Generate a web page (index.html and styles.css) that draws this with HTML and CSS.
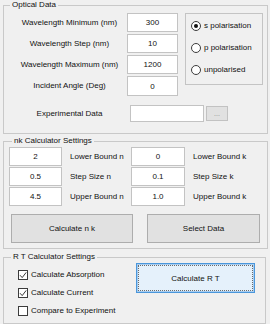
FILE: index.html
```html
<!DOCTYPE html>
<html lang="en">
<head>
  <meta charset="UTF-8">
  <meta name="viewport" content="width=device-width, initial-scale=1.0">
  <title>nk / RT Calculator</title>
  <link rel="stylesheet" href="styles.css">
</head>
<body>
  <fieldset class="panel optical">
    <legend>Optical Data</legend>
    <div class="optical-top">
      <div class="fields">
        <label class="field-label">Wavelength Minimum (nm)</label>
        <input class="num" type="text" value="300">
        <label class="field-label">Wavelength Step (nm)</label>
        <input class="num" type="text" value="10">
        <label class="field-label">Wavelength Maximum (nm)</label>
        <input class="num" type="text" value="1200">
        <label class="field-label">Incident Angle (Deg)</label>
        <input class="num tall" type="text" value="0">
      </div>
      <div class="radio-box">
        <div class="radio-item"><span class="radio checked"></span>s polarisation</div>
        <div class="radio-item"><span class="radio"></span>p polarisation</div>
        <div class="radio-item"><span class="radio"></span>unpolarised</div>
      </div>
    </div>
    <div class="exp-row">
      <label class="field-label">Experimental Data</label>
      <input class="path" type="text" value="">
      <button class="browse">...</button>
    </div>
  </fieldset>

  <fieldset class="panel nk">
    <legend>nk Calculator Settings</legend>
    <div class="nk-grid">
      <input class="num" type="text" value="2">
      <span class="nk-label">Lower Bound n</span>
      <input class="num" type="text" value="0">
      <span class="nk-label">Lower Bound k</span>

      <input class="num" type="text" value="0.5">
      <span class="nk-label">Step Size n</span>
      <input class="num" type="text" value="0.1">
      <span class="nk-label">Step Size k</span>

      <input class="num" type="text" value="4.5">
      <span class="nk-label">Upper Bound n</span>
      <input class="num" type="text" value="1.0">
      <span class="nk-label">Upper Bound k</span>
    </div>
    <div class="nk-buttons">
      <button class="btn calc-nk">Calculate n k</button>
      <button class="btn select-data">Select Data</button>
    </div>
  </fieldset>

  <fieldset class="panel rt">
    <legend>R T Calculator Settings</legend>
    <div class="rt-body">
      <div class="checks">
        <div class="check-item">
          <span class="check"><svg viewBox="0 0 10 10" width="10" height="10"><path d="M2 5.2 L4.2 7.6 L8.2 2.4" fill="none" stroke="#3a3a3a" stroke-width="1"/></svg></span>
          Calculate Absorption
        </div>
        <div class="check-item">
          <span class="check"><svg viewBox="0 0 10 10" width="10" height="10"><path d="M2 5.2 L4.2 7.6 L8.2 2.4" fill="none" stroke="#3a3a3a" stroke-width="1"/></svg></span>
          Calculate Current
        </div>
        <div class="check-item">
          <span class="check"></span>
          Compare to Experiment
        </div>
      </div>
      <button class="btn calc-rt">Calculate R T</button>
    </div>
  </fieldset>
</body>
</html>
```

FILE: styles.css
```css
body {
  margin: 0;
  padding: 0;
  background-color: #f0f0f0;
  font-family: "Liberation Sans", Arial, sans-serif;
  font-size: 8px;
  line-height: 10px;
  color: #111;
  width: 270px;
  height: 324px;
  overflow: hidden;
}

/* group boxes */
.panel {
  margin: 0 0 0 3px;
  border: 1px solid #c9c9c9;
  box-sizing: border-box;
  min-width: 0;
}

.panel legend {
  padding: 0 2px;
  line-height: 10px;
  height: 10px;
}

.optical {
  width: 265px;
  padding: 3px 4px 11px 8px;
}

.optical legend {
  margin-left: -2px;
}

.nk {
  width: 265px;
  margin-top: 2px;
  padding: 1px 4px 5px 5px;
}

.nk legend {
  margin-left: 3px;
}

.rt {
  width: 263px;
  margin-top: 3px;
  padding: 1px 4px 7px 14px;
}

.rt legend {
  margin-left: -7px;
}

/* inputs */
input {
  font-family: inherit;
  font-size: 8px;
  color: #111;
  box-sizing: border-box;
  border: 1px solid #c3c3c3;
  background: #fff;
  margin: 0;
  padding: 0;
  outline: none;
}

.num {
  text-align: center;
  height: 19px;
}

/* optical data */
.optical-top {
  display: flex;
  align-items: flex-start;
}

.fields {
  display: grid;
  grid-template-columns: 115px 51px;
  row-gap: 2px;
  align-items: center;
}

.fields .tall {
  height: 20px;
}

.field-label {
  text-align: center;
}

.radio-box {
  margin-left: 7px;
  width: 78px;
  height: 72px;
  box-sizing: border-box;
  border: 1px solid #c4c4c4;
  padding: 1px 0 0 5px;
}

.radio-item {
  display: flex;
  align-items: center;
  height: 22px;
}

.radio {
  width: 10px;
  height: 10px;
  box-sizing: border-box;
  border: 1px solid #3c3c3c;
  border-radius: 50%;
  background: #fff;
  margin-right: 3px;
  display: flex;
  align-items: center;
  justify-content: center;
}

.radio.checked::after {
  content: "";
  width: 4px;
  height: 4px;
  border-radius: 50%;
  background: #111;
}

.exp-row {
  display: flex;
  align-items: center;
  margin-top: 9px;
  height: 17px;
}

.exp-row .field-label {
  width: 115px;
}

.path {
  margin-left: 3px;
  width: 74px;
  height: 17px;
}

.browse {
  margin-left: 2px;
  width: 22px;
  height: 15px;
  padding: 0;
  font-family: inherit;
  font-size: 7px;
  color: #8a8a8a;
  background: #e1e1e1;
  border: 1px solid #c2c2c2;
  line-height: 8px;
}

/* nk calculator */
.nk-grid {
  display: grid;
  grid-template-columns: 53px 69px 54px 1fr;
  row-gap: 1px;
  align-items: center;
}

.nk-label {
  padding-left: 8px;
}

.nk-buttons {
  display: flex;
  margin-top: 8px;
}

.btn {
  font-family: inherit;
  font-size: 8px;
  color: #111;
  background: #e1e1e1;
  border: 1px solid #adadad;
  padding: 0;
  box-sizing: border-box;
}

.calc-nk {
  margin-left: 2px;
  width: 122px;
  height: 29px;
}

.select-data {
  margin-left: 14px;
  width: 113px;
  height: 29px;
}

/* R T calculator */
.rt-body {
  display: flex;
  align-items: flex-start;
}

.checks {
  width: 118px;
  padding-top: 7px;
  display: flex;
  flex-direction: column;
  gap: 8px;
}

.check-item {
  display: flex;
  align-items: center;
  height: 10px;
}

.check {
  width: 10px;
  height: 10px;
  box-sizing: border-box;
  border: 1px solid #3c3c3c;
  background: #fff;
  margin-right: 3px;
  display: flex;
}

.check svg {
  margin: -1px;
}

.calc-rt {
  width: 119px;
  height: 30px;
  background: #e5f1fb;
  border: 1px solid #4a97dc;
  box-shadow: inset 0 0 0 1px #a9cdef;
  outline: 1px dotted #6b6b6b;
  outline-offset: -3px;
}
```
